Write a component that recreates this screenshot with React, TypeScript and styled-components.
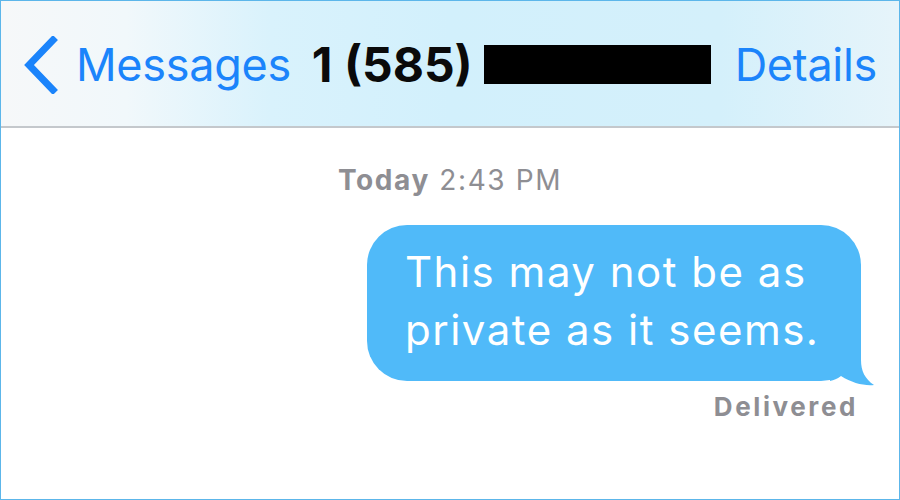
import React from 'react'
import styled, { createGlobalStyle } from 'styled-components'

const GlobalStyle = createGlobalStyle`
  html, body {
    margin: 0;
    padding: 0;
    background: #ffffff;
  }
  * {
    box-sizing: border-box;
  }
`

const Frame = styled.div`
  width: 900px;
  height: 500px;
  border: 1px solid #5cb6ea;
  background: #ffffff;
  font-family: Inter, Roboto, 'Liberation Sans', sans-serif;
  display: flex;
  flex-direction: column;
  overflow: hidden;
`

const NavBar = styled.header`
  height: 127px;
  flex-shrink: 0;
  display: flex;
  align-items: center;
  padding: 2px 22px 0 21px;
  border-bottom: 2px solid #c4c8cc;
  background: linear-gradient(
    90deg,
    #f6f8f9 0%,
    #f1f8fb 14%,
    #d9f2fc 30%,
    #d2f0fc 50%,
    #d4f0fb 80%,
    #e6f4fa 100%
  );
`

const BackButton = styled.div`
  display: flex;
  align-items: center;
  gap: 18px;
  color: #1b84fb;
  font-size: 45px;
  letter-spacing: -0.3px;
`

const Title = styled.div`
  display: flex;
  align-items: center;
  gap: 11px;
  margin-left: 21px;
  font-size: 48px;
  font-weight: 700;
  color: #0a0a0a;
`

const Redacted = styled.span`
  display: inline-block;
  width: 227px;
  height: 39px;
  background: #000000;
`

const ActionLink = styled.div`
  margin-left: auto;
  color: #1b84fb;
  font-size: 45px;
  letter-spacing: -0.3px;
`

const Thread = styled.main`
  flex: 1;
  display: flex;
  flex-direction: column;
  padding: 35px 28px 0 0;
`

const Timestamp = styled.div`
  text-align: center;
  color: #8e8e93;
  font-size: 28px;
  letter-spacing: 1.6px;
  padding-left: 28px;

  strong {
    font-weight: 700;
  }
`

const BubbleRow = styled.div`
  display: flex;
  justify-content: flex-end;
  margin-top: 28px;
  padding-right: 10px;
`

const Bubble = styled.div`
  position: relative;
  width: 494px;
  padding: 18px 16px 22px 38px;
  border-radius: 40px;
  background: #50baf9;
  color: #ffffff;
  font-size: 42px;
  line-height: 58px;
  letter-spacing: 1.5px;
`

const Tail = styled.svg`
  position: absolute;
  right: -14px;
  bottom: -5px;
  width: 45px;
  height: 46px;
`

const Status = styled.div`
  text-align: right;
  color: #8e8e93;
  font-size: 26px;
  font-weight: 700;
  letter-spacing: 2.6px;
  margin-top: 10px;
  padding-right: 13px;
`

const App: React.FC = () => {
  return (
    <>
      <GlobalStyle />
      <Frame>
        <NavBar>
          <BackButton>
            <svg width="36" height="58" viewBox="0 0 36 58">
              <path
                d="M31 4 L7 29 L31 54"
                fill="none"
                stroke="#1b84fb"
                strokeWidth="7"
                strokeLinecap="square"
              />
            </svg>
            <span>Messages</span>
          </BackButton>
          <Title>
            <span>1 (585)</span>
            <Redacted />
          </Title>
          <ActionLink>Details</ActionLink>
        </NavBar>
        <Thread>
          <Timestamp>
            <strong>Today</strong> 2:43 PM
          </Timestamp>
          <BubbleRow>
            <Bubble>
              This may not be as private as it seems.
              <Tail viewBox="0 0 45 46">
                <path
                  d="M31 0 L31 20 C31 31 35 39 44 45 C34 46 22 43 11 36 C7 39 4 40 0 41 L0 0 Z"
                  fill="#50baf9"
                />
              </Tail>
            </Bubble>
          </BubbleRow>
          <Status>Delivered</Status>
        </Thread>
      </Frame>
    </>
  )
}

export default App
